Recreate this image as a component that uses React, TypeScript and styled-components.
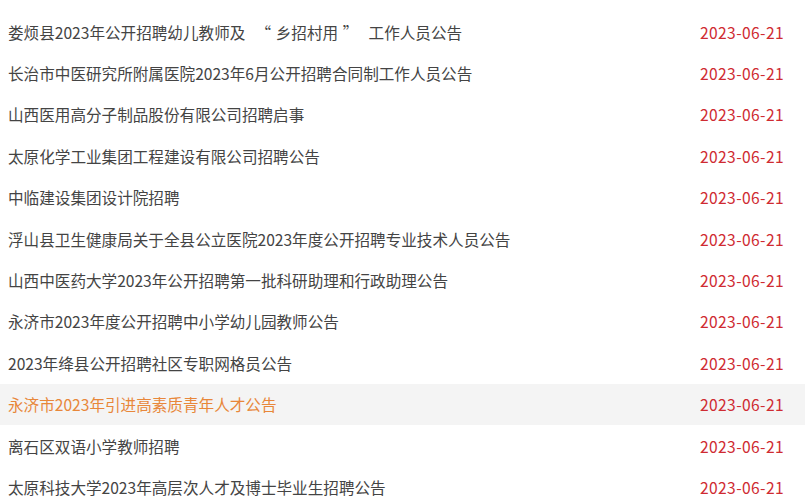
import React from "react";
import styled, { createGlobalStyle } from "styled-components";

const GlobalStyle = createGlobalStyle`
  html, body {
    margin: 0;
    padding: 0;
    background: #fff;
  }
  body {
    font-family: "Noto Sans CJK SC", "Noto Sans", sans-serif;
  }
`;

const List = styled.ul`
  list-style: none;
  margin: 0;
  padding: 11px 0 0 0;
  width: 805px;
  height: 500px;
  overflow: hidden;
`;

const Row = styled.li<{ $active?: boolean }>`
  display: flex;
  align-items: center;
  justify-content: space-between;
  height: 41.4px;
  padding: 0 21px 0 8px;
  background-color: ${(p) => (p.$active ? "#f4f4f4" : "transparent")};
  cursor: pointer;
`;

const Title = styled.a<{ $active?: boolean }>`
  font-size: 15.6px;
  color: ${(p) => (p.$active ? "#e8873a" : "#444")};
  text-decoration: none;
  white-space: nowrap;
`;

// chinese quotes take a wide cell in the original
const Quote = styled.span<{ $open?: boolean }>`
  display: inline-block;
  width: 1.95em;
  text-align: ${(p) => (p.$open ? "right" : "left")};
  padding: ${(p) => (p.$open ? "0 0.3em 0 0" : "0 0 0 0.3em")};
  box-sizing: border-box;
`;

const Date = styled.span`
  font-size: 15.6px;
  color: #cf2b32;
  letter-spacing: 0.4px;
`;

const items = [
  "娄烦县2023年公开招聘幼儿教师及“乡招村用”工作人员公告",
  "长治市中医研究所附属医院2023年6月公开招聘合同制工作人员公告",
  "山西医用高分子制品股份有限公司招聘启事",
  "太原化学工业集团工程建设有限公司招聘公告",
  "中临建设集团设计院招聘",
  "浮山县卫生健康局关于全县公立医院2023年度公开招聘专业技术人员公告",
  "山西中医药大学2023年公开招聘第一批科研助理和行政助理公告",
  "永济市2023年度公开招聘中小学幼儿园教师公告",
  "2023年绛县公开招聘社区专职网格员公告",
  "永济市2023年引进高素质青年人才公告",
  "离石区双语小学教师招聘",
  "太原科技大学2023年高层次人才及博士毕业生招聘公告",
];

function renderTitle(text: string) {
  return text.split(/([“”])/).map((part, i) =>
    part === "“" || part === "”" ? (
      <Quote key={i} $open={part === "“"}>
        {part}
      </Quote>
    ) : (
      part
    )
  );
}

function App() {
  return (
    <>
      <GlobalStyle />
      <List lang="zh-CN">
        {items.map((title, i) => (
          <Row key={i} $active={i === 9}>
            <Title href="#" $active={i === 9}>
              {renderTitle(title)}
            </Title>
            <Date>2023-06-21</Date>
          </Row>
        ))}
      </List>
    </>
  );
}

export default App;
